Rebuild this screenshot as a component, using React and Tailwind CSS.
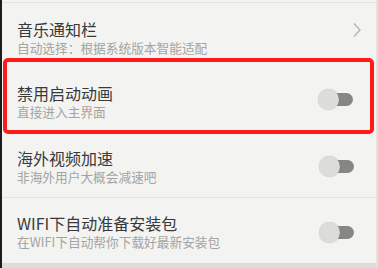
const font = { fontFamily: '"Noto Sans CJK SC", "Noto Sans", sans-serif' };

function Toggle({ className = "" }) {
  return (
    <div className={"relative w-[35px] h-[21px] shrink-0 " + className}>
      <div className="absolute right-0 top-[4px] h-[13px] w-[26px] rounded-full bg-[#868684]" />
      <div className="absolute left-0 top-0 h-[21px] w-[21px] rounded-full bg-[#dcdcda] shadow-[0_0_1px_rgba(0,0,0,0.25)]" />
    </div>
  );
}

function Texts({ title, sub }) {
  return (
    <div className="flex flex-col">
      <div className="text-[16px] leading-[20px] text-[#393939]">{title}</div>
      <div className="mt-[1px] text-[12.7px] leading-[16px] text-[#a4a4a2]">{sub}</div>
    </div>
  );
}

export default function App() {
  return (
    <div className="w-[378px] h-[268px] flex bg-[#f3f3f1] overflow-hidden" style={font}>
      {/* left dark edge */}
      <div className="w-[2px] bg-[#1c1c1c]" />

      <div className="flex-1 flex flex-col">
        <div className="h-[3px] border-b border-[#e4e4e2]" />

        {/* music notification */}
        <div className="h-[55px] flex items-start justify-between pl-[15px] pr-[14px] pt-[16px]">
          <Texts title="音乐通知栏" sub="自动选择：根据系统版本智能适配" />
          <svg width="10" height="16" viewBox="0 0 10 16" className="mt-[3px]">
            <path d="M2 1.5 L8 8 L2 14.5" fill="none" stroke="#b4b4b2" strokeWidth="1.3" />
          </svg>
        </div>

        {/* highlighted row */}
        <div className="ml-[1px] mr-[2px] h-[76px] border-[4px] border-[#ff1b1b] rounded-[5px] flex items-start justify-between pl-[10px] pr-[17px] pt-[21px]">
          <Texts title="禁用启动动画" sub="直接进入主界面" />
          <Toggle className="mt-[6px]" />
        </div>

        <div className="h-[64px] flex items-start justify-between pl-[15px] pr-[22px] pt-[14px] border-b border-[#e3e3e1]">
          <Texts title="海外视频加速" sub="非海外用户大概会减速吧" />
          <Toggle className="mt-[8px]" />
        </div>

        <div className="h-[65px] flex items-start justify-between pl-[15px] pr-[22px] pt-[15px]">
          <Texts title="WIFI下自动准备安装包" sub="在WIFI下自动帮你下载好最新安装包" />
          <Toggle className="mt-[9px]" />
        </div>

        <div className="flex-1 bg-[#dcdcda]" />
      </div>

      {/* right edge */}
      <div className="w-[2px] bg-[#e2e2e0]" />
    </div>
  );
}
